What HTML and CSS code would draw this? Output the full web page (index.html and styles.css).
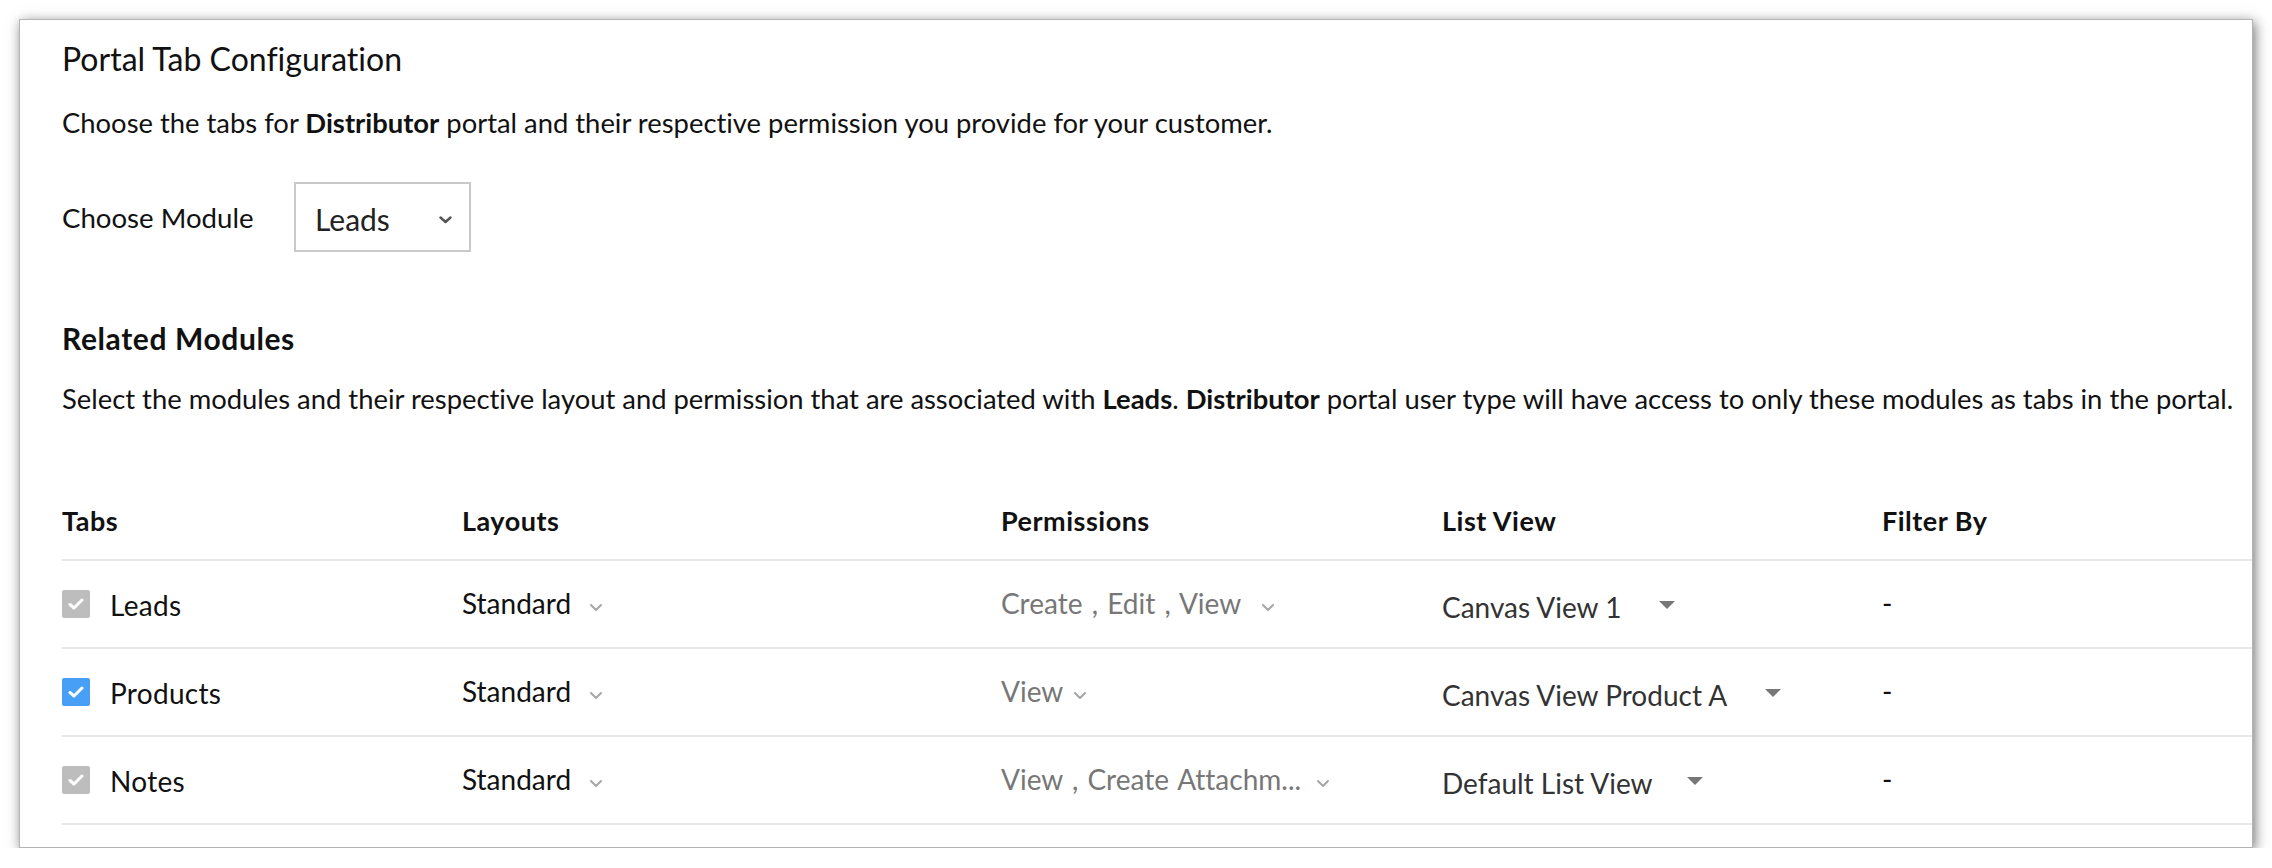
FILE: index.html
```html
<!DOCTYPE html>
<html>
<head>
<meta charset="utf-8">
<link rel="stylesheet" href="styles.css">
</head>
<body>
<div class="card">
  <h1 class="title">Portal Tab Configuration</h1>
  <p class="desc">Choose the tabs for <b>Distributor</b> portal and their respective permission you provide for your customer.</p>
  <div class="module-row">
    <span class="module-label">Choose Module</span>
    <div class="select">
      <span>Leads</span>
      <svg class="sel-chev" width="13" height="8" viewBox="0 0 13 8"><path d="M1.5 1.5 L6.5 6 L11.5 1.5" fill="none" stroke="#555" stroke-width="2.4" stroke-linecap="round" stroke-linejoin="round"/></svg>
    </div>
  </div>
  <h2 class="subtitle">Related Modules</h2>
  <p class="desc desc2">Select the modules and their respective layout and permission that are associated with <b>Leads</b>. <b>Distributor</b> portal user type will have access to only these modules as tabs in the portal.</p>

  <div class="table">
    <div class="row head">
      <div class="cell">Tabs</div>
      <div class="cell">Layouts</div>
      <div class="cell">Permissions</div>
      <div class="cell">List View</div>
      <div class="cell">Filter By</div>
    </div>

    <div class="row">
      <div class="cell"><span class="cb gray"><svg width="16" height="12" viewBox="0 0 16 12"><path d="M2 6.5 L6 10 L14 2" fill="none" stroke="#fff" stroke-width="3" stroke-linecap="round" stroke-linejoin="round"/></svg></span><span class="tab-name">Leads</span></div>
      <div class="cell"><span class="layout">Standard</span><svg class="chev" width="14" height="9" viewBox="0 0 14 9"><path d="M2 2 L7 7 L12 2" fill="none" stroke="#a6a6a6" stroke-width="2" stroke-linecap="round" stroke-linejoin="round"/></svg></div>
      <div class="cell"><span class="perm">Create , Edit , View</span><svg class="chev chev-perm" width="14" height="9" viewBox="0 0 14 9"><path d="M2 2 L7 7 L12 2" fill="none" stroke="#a6a6a6" stroke-width="2" stroke-linecap="round" stroke-linejoin="round"/></svg></div>
      <div class="cell"><span class="lv">Canvas View 1</span><svg class="tri" width="18" height="10" viewBox="0 0 18 10"><path d="M1 1 L17 1 L9 9 Z" fill="#777"/></svg></div>
      <div class="cell"><span class="dash">-</span></div>
    </div>

    <div class="row">
      <div class="cell"><span class="cb blue"><svg width="16" height="12" viewBox="0 0 16 12"><path d="M2 6.5 L6 10 L14 2" fill="none" stroke="#fff" stroke-width="3" stroke-linecap="round" stroke-linejoin="round"/></svg></span><span class="tab-name">Products</span></div>
      <div class="cell"><span class="layout">Standard</span><svg class="chev" width="14" height="9" viewBox="0 0 14 9"><path d="M2 2 L7 7 L12 2" fill="none" stroke="#a6a6a6" stroke-width="2" stroke-linecap="round" stroke-linejoin="round"/></svg></div>
      <div class="cell"><span class="perm">View</span><svg class="chev chev-perm-s" width="14" height="9" viewBox="0 0 14 9"><path d="M2 2 L7 7 L12 2" fill="none" stroke="#a6a6a6" stroke-width="2" stroke-linecap="round" stroke-linejoin="round"/></svg></div>
      <div class="cell"><span class="lv">Canvas View Product A</span><svg class="tri" width="18" height="10" viewBox="0 0 18 10"><path d="M1 1 L17 1 L9 9 Z" fill="#777"/></svg></div>
      <div class="cell"><span class="dash">-</span></div>
    </div>

    <div class="row">
      <div class="cell"><span class="cb gray"><svg width="16" height="12" viewBox="0 0 16 12"><path d="M2 6.5 L6 10 L14 2" fill="none" stroke="#fff" stroke-width="3" stroke-linecap="round" stroke-linejoin="round"/></svg></span><span class="tab-name">Notes</span></div>
      <div class="cell"><span class="layout">Standard</span><svg class="chev" width="14" height="9" viewBox="0 0 14 9"><path d="M2 2 L7 7 L12 2" fill="none" stroke="#a6a6a6" stroke-width="2" stroke-linecap="round" stroke-linejoin="round"/></svg></div>
      <div class="cell"><span class="perm">View , Create Attachm...</span><svg class="chev chev-perm-m" width="14" height="9" viewBox="0 0 14 9"><path d="M2 2 L7 7 L12 2" fill="none" stroke="#a6a6a6" stroke-width="2" stroke-linecap="round" stroke-linejoin="round"/></svg></div>
      <div class="cell"><span class="lv">Default List View</span><svg class="tri tri-short" width="18" height="10" viewBox="0 0 18 10"><path d="M1 1 L17 1 L9 9 Z" fill="#777"/></svg></div>
      <div class="cell"><span class="dash">-</span></div>
    </div>
  </div>
</div>
</body>
</html>
```

FILE: styles.css
```css
html, body {
  margin: 0;
  padding: 0;
  background: #ffffff;
}

body {
  font-family: Lato, "Liberation Sans", sans-serif;
  font-variant-ligatures: none;
  color: #111;
}

.card {
  box-sizing: border-box;
  margin: 19px 0 0 19px;
  width: 2234px;
  height: 829px;
  border: 1px solid #b4b4b4;
  background: #fff;
  box-shadow: 2px 3px 12px rgba(0, 0, 0, 0.55);
  overflow: hidden;
  padding: 19px 0 0 42px;
}

.title {
  margin: 0;
  font-size: 32px;
  font-weight: 400;
  line-height: 40px;
  color: #111;
}

.desc {
  margin: 24px 0 0 0;
  font-size: 27.4px;
  line-height: 40px;
  color: #111;
}

.desc b {
  font-weight: 700;
}

.module-row {
  margin-top: 39px;
  display: flex;
  align-items: center;
  height: 70px;
}

.module-label {
  font-size: 27.6px;
  width: 232px;
}

.select {
  box-sizing: border-box;
  width: 177px;
  height: 70px;
  border: 2px solid #c9c9c9;
  display: flex;
  align-items: center;
  padding: 4px 0 0 19px;
  font-size: 30px;
  color: #222;
}

.select span {
  flex: 1;
}

.sel-chev {
  margin-right: 17px;
  margin-top: 2px;
}

.subtitle {
  margin: 66px 0 0 0;
  font-size: 30px;
  font-weight: 700;
  letter-spacing: 0.6px;
  line-height: 40px;
  color: #111;
}

.desc2 {
  margin-top: 21px;
}

.table {
  margin-top: 62px;
}

.row {
  display: grid;
  grid-template-columns: 400px 539px 441px 440px 1fr;
  height: 88px;
  box-sizing: border-box;
  border-bottom: 2px solid #e8e8e8;
  align-items: center;
}

.row.head {
  height: 80px;
}

.row.head .cell {
  font-weight: 700;
  font-size: 27px;
  letter-spacing: 0.5px;
  color: #111;
}

.cell {
  display: flex;
  align-items: center;
  font-size: 28px;
}

.cb {
  width: 28px;
  height: 28px;
  border-radius: 2px;
  display: inline-flex;
  align-items: center;
  justify-content: center;
  margin-right: 20px;
}

.cb.gray {
  background: #bdbdbd;
}

.cb.blue {
  background: #47a0f5;
}

.tab-name {
  color: #111;
  letter-spacing: 0.3px;
  margin-top: 2px;
}

.layout {
  color: #111;
  margin-top: -2px;
}

.chev {
  margin-left: 18px;
  margin-top: 6px;
}

.chev-perm {
  margin-left: 20px;
}

.chev-perm-s {
  margin-left: 10px;
}

.chev-perm-m {
  margin-left: 15px;
}

.perm {
  color: #777;
  margin-top: -2px;
  word-spacing: 2px;
}

.lv {
  color: #333;
  margin-top: 6px;
}

.tri {
  margin-left: 37px;
  margin-top: 2px;
}

.tri-short {
  margin-left: 33px;
}

.dash {
  color: #111;
  margin-top: -2px;
}
```
